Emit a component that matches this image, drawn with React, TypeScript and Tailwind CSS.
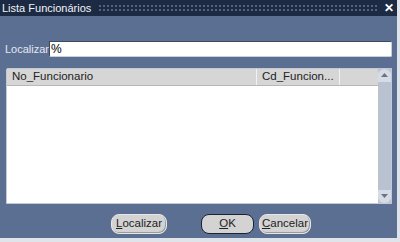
import React from 'react';

const font = { fontFamily: '"Liberation Sans", Arial, sans-serif' };

type ButtonProps = { label: string; width: string; isDefault?: boolean };

const FormButton = ({ label, width, isDefault }: ButtonProps) => (
  <button
    className={`h-[20px] ${width} rounded-[8px] bg-[#d3d3d3] text-[11.5px] text-[#222] flex items-center justify-center ${
      isDefault ? 'border border-[#1b2230]' : 'border border-[#e6e6e6] shadow-[inset_-1px_-1px_0_#9a9a9a]'
    }`}
  >
    <span className="underline underline-offset-1">{label[0]}</span>
    {label.slice(1)}
  </button>
);

const App = () => {
  return (
    <div className="w-[400px] h-[242px] bg-[#dfe3ea] overflow-hidden" style={font}>
      <div className="w-[397px] h-[238px] flex flex-col bg-[#5b6f93]">
        {/* title bar */}
        <div className="h-[16px] bg-[#1d2a44] flex items-center pl-[2px] pr-[3px] gap-[7px]">
          <span className="text-[#f2f4f8] text-[11px] leading-none whitespace-nowrap">Lista Funcionários</span>
          <div className="flex-1 h-[8px] bg-[radial-gradient(circle,#56637c_0.9px,transparent_1.1px)] bg-[length:4px_4px]" />
          <span className="text-white text-[12px] font-bold leading-none">✕</span>
        </div>

        {/* search row */}
        <div className="flex items-center mt-[25px] pl-[5px] pr-[5px]">
          <span className="text-[11px] text-[#e4e8ef] w-[44px]">Localizar</span>
          <div className="flex-1 h-[16px] bg-white border-t border-l border-[#3b4a63] border-b border-r border-b-[#c9d0dc] border-r-[#c9d0dc] rounded-r-[2px] flex items-center pl-[1px] text-[12px] text-black">
            %
          </div>
        </div>

        {/* list */}
        <div className="mt-[10px] ml-[6px] mr-[5px] h-[136px] bg-white border border-[#c4cad4] rounded-tl-[2px] flex">
          <div className="flex-1 flex flex-col">
            <div className="h-[17px] bg-[#d6d6d6] border-b border-[#b8b8b8] flex text-[11.5px] text-[#222]">
              <div className="w-[250px] pl-[5px] flex items-center border-r border-[#f2f2f2]">No_Funcionario</div>
              <div className="w-[83px] pl-[5px] flex items-center border-r border-[#f2f2f2] whitespace-nowrap">Cd_Funcion...</div>
              <div className="flex-1" />
            </div>
            <div className="flex-1" />
          </div>
          <div className="w-[13px] bg-[#b9c2d0] flex flex-col justify-between">
            <div className="h-[13px] rounded-t-[6px] bg-[#d7dce4] flex items-center justify-center">
              <svg width="7" height="4" viewBox="0 0 7 4"><path d="M3.5 0L7 4H0z" fill="#6a7488" /></svg>
            </div>
            <div className="h-[13px] rounded-b-[6px] bg-[#d7dce4] flex items-center justify-center">
              <svg width="7" height="4" viewBox="0 0 7 4"><path d="M0 0H7L3.5 4z" fill="#6a7488" /></svg>
            </div>
          </div>
        </div>

        {/* buttons */}
        <div className="flex mt-[10px] pl-[111px]">
          <FormButton label="Localizar" width="w-[56px]" />
          <div className="w-[34px]" />
          <FormButton label="OK" width="w-[53px]" isDefault />
          <div className="w-[5px]" />
          <FormButton label="Cancelar" width="w-[52px]" />
        </div>
      </div>
    </div>
  );
};

export default App;
